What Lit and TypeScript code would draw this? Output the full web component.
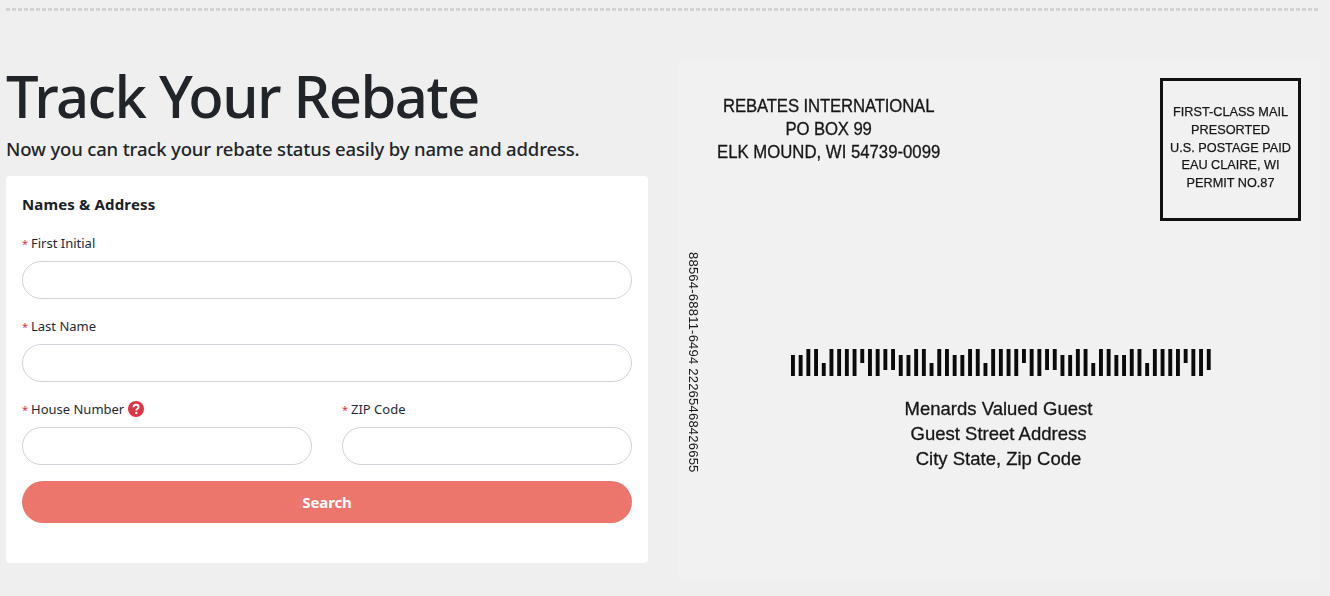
import { LitElement, html, css, svg } from "lit";
import { customElement } from "lit/decorators.js";

const BARS = "MMFFSFFFFUFFAAMMFFSFFMMFFSFFFFUFFAAMMFFSFFMMFFSFFFFUFFA".split("");
const SHAPE: Record<string, [number, number]> = {
  F: [0, 27],
  M: [6, 21],
  S: [14, 13],
  U: [0, 14],
  A: [0, 21],
};

@customElement("app-root")
export class AppRoot extends LitElement {
  static styles = css`
    :host {
      display: block;
      width: 1330px;
      height: 596px;
      overflow: hidden;
      background: #efefef;
      font-family: "Noto Sans", "Open Sans", sans-serif;
      color: #212529;
      box-sizing: border-box;
    }
    .rule {
      margin: 0 10px 0 6px;
      padding-top: 8px;
      height: 3px;
      box-sizing: content-box;
    }
    .rule div {
      height: 3px;
      background-image: repeating-linear-gradient(90deg, #d3d3d3 0 4px, transparent 4px 6px);
    }
    .main {
      display: flex;
      padding: 49px 0 0 6px;
    }
    .left {
      width: 642px;
      flex: none;
    }
    h1 {
      margin: -1px 0 3px;
      font-size: 58px;
      line-height: 74px;
      font-weight: 500;
      letter-spacing: -1.55px;
      white-space: nowrap;
    }
    .sub {
      margin: 0 0 14px;
      font-size: 18.5px;
      line-height: 26px;
      font-weight: 500;
      letter-spacing: -0.16px;
      white-space: nowrap;
    }
    .card {
      background: #fff;
      border-radius: 4px;
      padding: 16px 16px 40px;
      height: 387px;
      box-sizing: border-box;
    }
    h2 {
      margin: 0 0 17px;
      font-size: 15px;
      line-height: 24px;
      font-weight: 700;
      color: #1a2026;
      letter-spacing: 0.15px;
    }
    .field { margin-bottom: 17px; }
    .row .field { margin-bottom: 16px; }
    label {
      display: flex;
      align-items: center;
      height: 20px;
      margin-bottom: 8px;
      font-size: 13px;
      color: #1f2a37;
    }
    .req {
      width: 9px;
      flex: none;
      color: #dc3545;
      font-size: 11px;
    }
    .help {
      width: 16px;
      height: 16px;
      margin-left: 4px;
      flex: none;
    }
    .box {
      display: block;
      height: 38px;
      width: 100%;
      box-sizing: border-box;
      border: 1px solid #ced4da;
      border-radius: 19px;
      background: #fff;
    }
    .row {
      display: grid;
      grid-template-columns: 290px 290px;
      column-gap: 30px;
    }
    .btn {
      display: block;
      width: 100%;
      height: 42px;
      border: 0;
      border-radius: 21px;
      background: #ec756c;
      color: #fff;
      font: 700 15px "Noto Sans", sans-serif;
      letter-spacing: -0.1px;
    }
    .envelope {
      width: 643px;
      height: 519px;
      flex: none;
      margin-left: 29px;
      background: #f1f1f1;
      border-radius: 4px;
      box-sizing: border-box;
      padding: 18px 19px 0 40px;
      font-family: "Liberation Sans", Arial, sans-serif;
      color: #161616;
      filter: blur(0.35px);
      -webkit-text-stroke: 0.3px #161616;
      position: relative;
    }
    .top {
      display: flex;
      justify-content: space-between;
      align-items: flex-start;
    }
    .ret {
      font-size: 18px;
      line-height: 23px;
      text-align: center;
      margin-top: 17px;
      transform: scaleX(0.93);
      transform-origin: left top;
    }
    .tight { letter-spacing: -0.15px; }
    .stamp {
      width: 141px;
      height: 143px;
      box-sizing: border-box;
      border: 3px solid #111;
      padding: 22px 0 0;
      font-size: 13.5px;
      line-height: 17.8px;
      text-align: center;
      -webkit-text-stroke: 0.25px #161616;
    }
    .stamp-text {
      white-space: nowrap;
      transform: scaleX(0.94);
    }
    .side {
      position: absolute;
      left: 9px;
      top: 192px;
      writing-mode: vertical-rl;
      font-size: 13px;
      line-height: 14px;
      letter-spacing: 0.22px;
      white-space: nowrap;
      -webkit-text-stroke: 0;
    }
    .bars {
      display: block;
      width: 420px;
      height: 27px;
      margin: 127.5px 0 0 74px;
    }
    .bars rect { fill: #0a0a0a; }
    .to {
      margin-top: 20px;
      padding-right: 1px;
      width: 563px;
      font-size: 18.5px;
      line-height: 25.3px;
      text-align: center;
    }
  `;

  field(name: string, help = false) {
    return html`<div class="field">
      <label><span class="req">*</span>${name}${help
          ? html`<svg class="help" viewBox="0 0 16 16">
              <circle cx="8" cy="8" r="8" fill="#dc3545"></circle>
              <path d="M5.5 6.2C5.6 4.6 6.7 3.8 8.1 3.8C9.6 3.8 10.6 4.7 10.6 5.9C10.6 7.6 8.3 7.7 8.3 9.4" fill="none" stroke="#fff" stroke-width="1.9"></path>
              <circle cx="8.3" cy="11.9" r="1.2" fill="#fff"></circle>
            </svg>`
          : ""}</label>
      <div class="box"></div>
    </div>`;
  }

  render() {
    return html`
      <div class="rule"><div></div></div>
      <div class="main">
        <section class="left">
          <h1>Track Your Rebate</h1>
          <p class="sub">Now you can track your rebate status easily by name and address.</p>
          <div class="card">
            <h2>Names &amp; Address</h2>
            ${this.field("First Initial")}
            ${this.field("Last Name")}
            <div class="row">
              ${this.field("House Number", true)}
              ${this.field("ZIP Code")}
            </div>
            <button class="btn">Search</button>
          </div>
        </section>
        <section class="envelope">
          <div class="top">
            <div class="ret">
              <div class="tight">REBATES INTERNATIONAL</div>
              <div class="tight">PO BOX 99</div>
              <div>ELK MOUND, WI 54739-0099</div>
            </div>
            <div class="stamp"><div class="stamp-text">FIRST-CLASS MAIL<br />PRESORTED<br />U.S. POSTAGE PAID<br />EAU CLAIRE, WI<br />PERMIT NO.87</div></div>
          </div>
          <div class="side">88564-68811-6494 22265468426655</div>
          <svg class="bars" viewBox="0 0 420 27">
            ${BARS.map((b, i) => svg`<rect x=${i * 7.7} y=${SHAPE[b][0]} width="3.9" height=${SHAPE[b][1]}></rect>`)}
          </svg>
          <div class="to">Menards Valued Guest<br />Guest Street Address<br />City State, Zip Code</div>
        </section>
      </div>
    `;
  }
}
